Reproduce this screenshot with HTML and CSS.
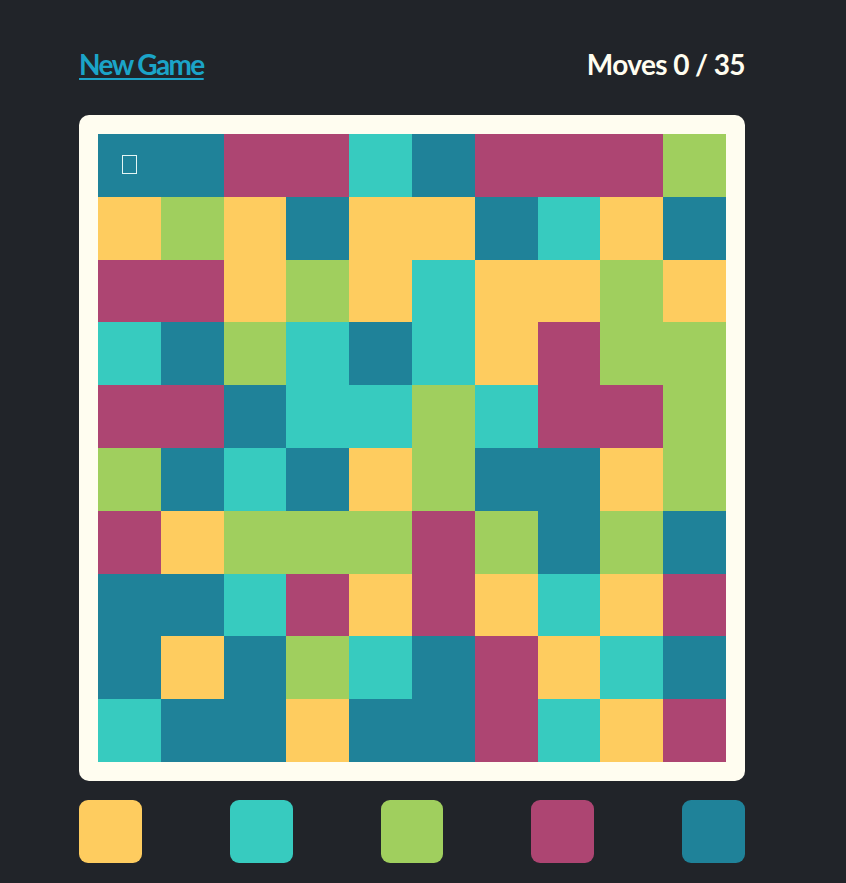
FILE: index.html
```html
<!DOCTYPE html>
<html>
<head>
<meta charset="utf-8">
<link rel="stylesheet" href="styles.css">
</head>
<body>
<div class="game">
  <header class="top">
    <a class="new-game" href="#">New Game</a>
    <div class="moves">Moves 0 / 35</div>
  </header>
  <div class="board">
    <div class="grid" id="grid"></div>
  </div>
  <div class="palette">
    <div class="swatch y"></div>
    <div class="swatch c"></div>
    <div class="swatch g"></div>
    <div class="swatch m"></div>
    <div class="swatch d"></div>
  </div>
</div>
<script src="script.js"></script>
</body>
</html>
```
FILE: styles.css
```css
html, body {
  margin: 0;
  padding: 0;
  background: #212429;
}
body {
  font-family: Lato, "Open Sans", sans-serif;
}
.game {
  width: 666px;
  margin-left: 79px;
  padding-top: 47px;
}
.top {
  display: flex;
  justify-content: space-between;
  align-items: baseline;
  height: 34px;
  line-height: 34px;
  font-size: 28px;
  font-weight: 700;
}
.new-game {
  color: #1ba4c8;
  text-decoration: underline;
  text-decoration-thickness: 2px;
  text-underline-offset: 3px;
  letter-spacing: -1.6px;
}
.moves {
  color: #fffdf0;
  letter-spacing: -0.6px;
}
.board {
  margin-top: 34px;
  background: #fffdf0;
  border-radius: 10px;
  padding: 19px;
}
.grid {
  display: grid;
  grid-template-columns: repeat(10, 62.8px);
  grid-template-rows: repeat(10, 62.8px);
}
.cell {
  box-sizing: border-box;
}
.cell.first {
  padding: 21px 0 0 24px;
}
.tofu {
  display: block;
  box-sizing: border-box;
  width: 15px;
  height: 19px;
  border: 1.5px solid #e4f6f4;
}
.y { background: #fecc5f; }
.c { background: #37cbbf; }
.g { background: #a0cf5e; }
.m { background: #ad4572; }
.d { background: #1f8299; }
.palette {
  margin-top: 19px;
  display: flex;
  justify-content: space-between;
}
.swatch {
  width: 62.8px;
  height: 62.8px;
  border-radius: 9px;
}
```
FILE: script.js
```js
var rows = [
  "DDMMCDMMMG",
  "YGYDYYDCYD",
  "MMYGYCYYGY",
  "CDGCDCYMGG",
  "MMDCCGCMMG",
  "GDCDYGDDYG",
  "MYGGGMGDGD",
  "DDCMYMYCYM",
  "DYDGCDMYCD",
  "CDDYDDMCYM"
];
var grid = document.getElementById("grid");
rows.forEach(function (r, ri) {
  r.split("").forEach(function (ch, ci) {
    var d = document.createElement("div");
    d.className = "cell " + ch.toLowerCase();
    if (ri === 0 && ci === 0) {
      d.className += " first";
      var t = document.createElement("span");
      t.className = "tofu";
      d.appendChild(t);
    }
    grid.appendChild(d);
  });
});
```
